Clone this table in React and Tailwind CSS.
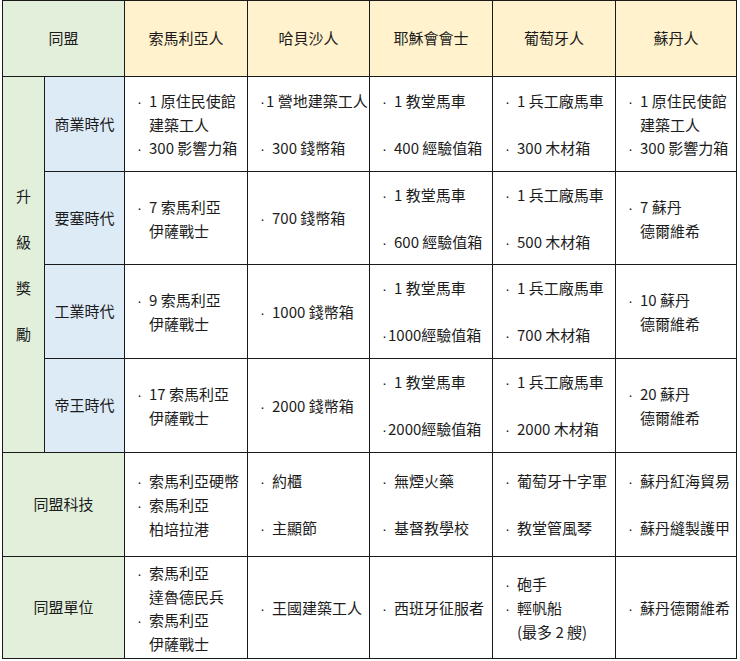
import React from "react";

const B = (t) => ({ k: "b", t });
const N = (t) => ({ k: "n", t }); // bullet without space
const C = (t) => ({ k: "c", t });
const E = { k: "e" };

const header = ["索馬利亞人", "哈貝沙人", "耶穌會會士", "葡萄牙人", "蘇丹人"];

const eras = [
  {
    label: "商業時代",
    cells: [
      [B("1 原住民使館"), C("建築工人"), B("300 影響力箱")],
      [N("1 營地建築工人"), E, B("300 錢幣箱")],
      [B("1 教堂馬車"), E, B("400 經驗值箱")],
      [B("1 兵工廠馬車"), E, B("300 木材箱")],
      [B("1 原住民使館"), C("建築工人"), B("300 影響力箱")],
    ],
  },
  {
    label: "要塞時代",
    cells: [
      [B("7 索馬利亞"), C("伊薩戰士")],
      [B("700 錢幣箱")],
      [B("1 教堂馬車"), E, B("600 經驗值箱")],
      [B("1 兵工廠馬車"), E, B("500 木材箱")],
      [B("7 蘇丹"), C("德爾維希")],
    ],
  },
  {
    label: "工業時代",
    cells: [
      [B("9 索馬利亞"), C("伊薩戰士")],
      [B("1000 錢幣箱")],
      [B("1 教堂馬車"), E, N("1000經驗值箱")],
      [B("1 兵工廠馬車"), E, B("700 木材箱")],
      [B("10 蘇丹"), C("德爾維希")],
    ],
  },
  {
    label: "帝王時代",
    cells: [
      [B("17 索馬利亞"), C("伊薩戰士")],
      [B("2000 錢幣箱")],
      [B("1 教堂馬車"), E, N("2000經驗值箱")],
      [B("1 兵工廠馬車"), E, B("2000 木材箱")],
      [B("20 蘇丹"), C("德爾維希")],
    ],
  },
];

const tech = [
  [B("索馬利亞硬幣"), B("索馬利亞"), C("柏培拉港")],
  [B("約櫃"), E, B("主顯節")],
  [B("無煙火藥"), E, B("基督教學校")],
  [B("葡萄牙十字軍"), E, B("教堂管風琴")],
  [B("蘇丹紅海貿易"), E, B("蘇丹縫製護甲")],
];

const units = [
  [B("索馬利亞"), C("達魯德民兵"), B("索馬利亞"), C("伊薩戰士")],
  [B("王國建築工人")],
  [B("西班牙征服者")],
  [B("砲手"), B("輕帆船"), C("(最多 2 艘)")],
  [B("蘇丹德爾維希")],
];

function Line({ l }) {
  if (l.k === "e") return <div className="h-[23px]" />;
  if (l.k === "c")
    return <div className="pl-[12px] leading-[23px] whitespace-nowrap">{l.t}</div>;
  return (
    <div className="leading-[23px] whitespace-nowrap">
      <span
        className={
          (l.k === "b" ? "w-[12px]" : "w-[6px]") +
          " inline-block font-['Liberation_Sans',sans-serif]"
        }
      >
        ·
      </span>
      {l.t}
    </div>
  );
}

function Cell({ lines }) {
  return (
    <div className="bg-white flex flex-col justify-center pl-[12px] overflow-hidden">
      {lines.map((l, i) => (
        <Line key={i} l={l} />
      ))}
    </div>
  );
}

export default function App() {
  return (
    <div
      className="bg-white w-[740px] h-[661px] text-[15px] text-[#1c1c1c]"
      style={{ fontFamily: '"Noto Sans CJK TC", "Noto Sans", sans-serif' }}
    >
      <div className="ml-[2px] inline-grid grid-cols-[41px_79px_122px_121px_122px_122px_120px] grid-rows-[75px_94px_92px_93px_93px_103px_101px] gap-px p-px bg-[#1a1a1a]">
        <div className="col-span-2 bg-[#e2efda] flex items-center justify-center">同盟</div>
        {header.map((h) => (
          <div key={h} className="bg-[#fff2cc] flex items-center justify-center">
            {h}
          </div>
        ))}

        <div className="row-span-4 bg-[#e2efda] flex flex-col items-center justify-center leading-[23px]">
          <div>升</div>
          <div className="h-[23px]" />
          <div>級</div>
          <div className="h-[23px]" />
          <div>獎</div>
          <div className="h-[23px]" />
          <div>勵</div>
        </div>

        {eras.map((era) => (
          <React.Fragment key={era.label}>
            <div className="col-start-2 bg-[#ddebf7] flex items-center justify-center">
              {era.label}
            </div>
            {era.cells.map((c, i) => (
              <Cell key={i} lines={c} />
            ))}
          </React.Fragment>
        ))}

        <div className="col-span-2 bg-[#e2efda] flex items-center justify-center">同盟科技</div>
        {tech.map((c, i) => (
          <Cell key={i} lines={c} />
        ))}

        <div className="col-span-2 bg-[#e2efda] flex items-center justify-center">同盟單位</div>
        {units.map((c, i) => (
          <Cell key={i} lines={c} />
        ))}
      </div>
    </div>
  );
}
